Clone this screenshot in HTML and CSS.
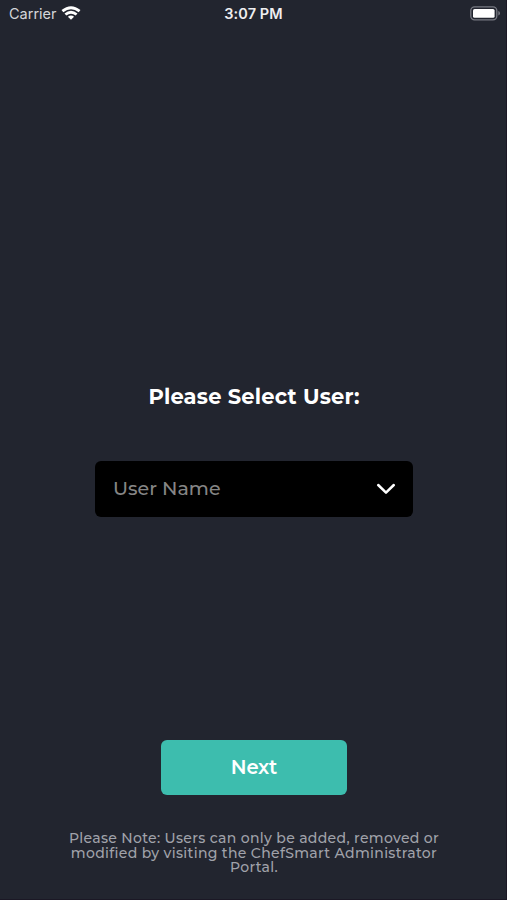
FILE: index.html
```html
<!DOCTYPE html>
<html lang="en">
<head>
    <meta charset="UTF-8">
    <meta name="viewport" content="width=device-width, initial-scale=1.0">
    <title>Select User</title>
    <link rel="stylesheet" href="styles.css">
</head>
<body>

<div class="screen">
    <header class="status-bar">
        <div class="carrier">
            <span>Carrier</span>
            <svg class="wifi" width="20" height="14" viewBox="0 0 20 14" fill="none" stroke="#fff" stroke-width="2.8">
                <path d="M1.4 5.2 Q10 -1.8 18.6 5.2"/>
                <path d="M4.4 8.5 Q10 3.9 15.6 8.5"/>
                <path d="M6.9 10.8 Q10 8.2 13.1 10.8 L10 13.8 Z" fill="#fff" stroke="none"/>
            </svg>
        </div>
        <div class="time">3:07 PM</div>
        <div class="battery">
            <svg width="31" height="15" viewBox="0 0 31 15">
                <rect x="0.8" y="0.8" width="26" height="13" rx="3.8" fill="none" stroke="#777982" stroke-width="1.3"/>
                <rect x="3" y="3" width="21.6" height="8.8" rx="1.6" fill="#fff"/>
                <path d="M28.3 5 Q30 5.6 30 7.3 Q30 9 28.3 9.6 Z" fill="#777982"/>
            </svg>
        </div>
    </header>

    <main class="content">
        <h1>Please Select User:</h1>
        <button class="user-select" type="button">
            <span>User Name</span>
            <svg width="20" height="12" viewBox="0 0 20 12" fill="none" stroke="#fff" stroke-width="2.5" stroke-linecap="round" stroke-linejoin="round">
                <path d="M2.2 2 L10 9.6 L17.8 2"/>
            </svg>
        </button>
    </main>

    <footer class="footer">
        <button class="next-button" type="button">Next</button>
        <p class="note">Please Note: Users can only be added, removed or modified by visiting the ChefSmart Administrator Portal.</p>
    </footer>
</div>

</body>
</html>
```

FILE: styles.css
```css
body {
    margin: 0;
    background-color: #22252f;
    color: #fff;
    font-family: Montserrat, Inter, sans-serif;
}

.screen {
    display: flex;
    flex-direction: column;
    align-items: center;
    height: 900px;
    overflow: hidden;
    box-shadow: inset -1px -1px 0 #1b1825;
}

.status-bar {
    box-sizing: border-box;
    display: grid;
    grid-template-columns: 1fr auto 1fr;
    align-items: center;
    width: 100%;
    height: 27px;
    padding: 0 6px 0 9px;
    font-family: Inter, sans-serif;
    font-size: 14.5px;
}

.carrier {
    display: flex;
    align-items: center;
    gap: 4px;
    color: #d4d5d9;
}

.wifi {
    margin-top: -2px;
}

.time {
    margin-right: 3px;
    font-weight: 600;
    letter-spacing: 0.1px;
    color: #eeeef0;
}

.battery {
    display: flex;
    justify-content: flex-end;
}

.content {
    width: 318px;
    margin-left: 1px;
    text-align: center;
}

h1 {
    margin: 357px 0 0;
    font-size: 21px;
    line-height: 26px;
    font-weight: 700;
    letter-spacing: 0.2px;
}

.user-select {
    box-sizing: border-box;
    display: flex;
    align-items: center;
    justify-content: space-between;
    width: 318px;
    height: 56px;
    margin-top: 51px;
    padding: 0 17px 0 18px;
    border: none;
    border-radius: 6px;
    background-color: #000;
    color: #858585;
    font: inherit;
    font-size: 19px;
    font-weight: 500;
    letter-spacing: 0;
}

.user-select span {
    padding-bottom: 1px;
}

.footer {
    display: flex;
    flex-direction: column;
    align-items: center;
    margin: 223px 0 0 1px;
}

.next-button {
    box-sizing: border-box;
    width: 186px;
    height: 55px;
    padding: 0 0 2px;
    border: none;
    border-radius: 6px;
    background-color: #3dbdae;
    color: #fff;
    font: inherit;
    font-size: 19.5px;
    font-weight: 600;
    letter-spacing: -0.2px;
}

.note {
    width: 390px;
    margin: 36px 0 0;
    color: #a0a2aa;
    font-size: 14px;
    line-height: 14.5px;
    font-weight: 500;
    letter-spacing: 0.33px;
    text-align: center;
}
```
